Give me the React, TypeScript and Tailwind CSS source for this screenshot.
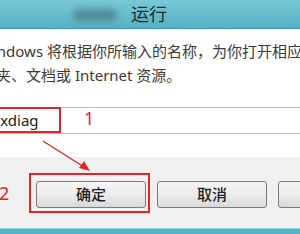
export default function App() {
  const font = "font-['Noto_Sans','Noto_Sans_CJK_SC',sans-serif]";

  return (
    <div className={`relative flex h-[234px] w-[300px] flex-col overflow-hidden bg-white ${font}`}>
      {/* title bar */}
      <div className="relative flex h-[29px] shrink-0 items-center justify-center border-b border-[#3f9aab] bg-gradient-to-b from-[#79c8d5] to-[#55b1c2]">
        <div className="absolute left-[73px] top-[9px] h-[12px] w-[44px] rounded-full bg-[#4a7882]/70 blur-[3px]" />
        <span className="ml-[-2px] text-[18px] leading-none text-[#1d2c31]">运行</span>
      </div>

      {/* body */}
      <div className="flex h-[128px] shrink-0 flex-col pt-[10px] text-[15px] text-[#3a3a3a]">
        <p className="ml-[-21px] whitespace-nowrap leading-[24px]">
          Windows 将根据你所输入的名称，为你打开相应的程
        </p>
        <p className="ml-[-34px] whitespace-nowrap leading-[24px]">
          文件夹、文档或 Internet 资源。
        </p>
        <div className="ml-[-20px] mt-[20px] flex h-[27px] w-[340px] items-center border-y border-[#b9bcc2] pl-[11px]">
          <span className="text-[15px] text-[#222]">dxdiag</span>
        </div>
      </div>

      {/* footer */}
      <div className="flex flex-1 gap-[11px] bg-[#f0f0f0] pl-[36px] pt-[24px]">
        {["确定", "取消", "帮助"].map((t) => (
          <div
            key={t}
            className="flex h-[27px] w-[110px] shrink-0 items-center justify-center rounded-[3px] border border-[#7c7c7c] bg-gradient-to-b from-[#f4f4f4] via-[#ececec] to-[#d9d9d9] text-[15px] font-medium text-[#222]"
          >
            {t}
          </div>
        ))}
      </div>
      <div className="h-[6px] shrink-0 border-t border-[#8fd3de] bg-[#55b3c4]" />

      {/* annotations */}
      <div className="absolute left-[-4px] top-[107px] h-[26px] w-[65px] border-2 border-[#e0262a]" />
      <span className="absolute left-[84px] top-[107px] text-[18px] leading-[22px] text-[#e0262a]">1</span>
      <svg className="absolute left-0 top-0" width="300" height="234">
        <line x1="43" y1="141" x2="84" y2="167" stroke="#d9272b" strokeWidth="1.3" />
        <polygon points="90,171 79,168 84,161" fill="#e0262a" />
      </svg>
      <span className="absolute left-[-1px] top-[182px] text-[18px] leading-[22px] text-[#e0262a]">2</span>
      <div className="absolute left-[29px] top-[173px] h-[40px] w-[121px] border-2 border-[#e0262a]" />
    </div>
  );
}
